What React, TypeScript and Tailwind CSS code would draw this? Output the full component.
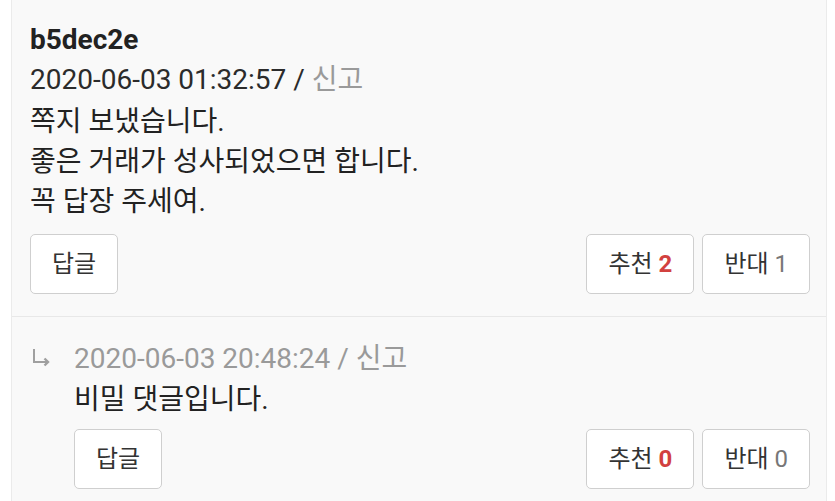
import React from "react";

const font = { fontFamily: "Roboto, 'Noto Sans CJK KR', sans-serif" };

function Btn({ children }: { children: React.ReactNode }) {
  return (
    <button className="h-[60px] px-[21px] rounded-[5px] border border-[#cfcfcf] bg-white text-[24px] text-[#333] leading-none whitespace-nowrap">
      {children}
    </button>
  );
}

function VoteRow({ up, down }: { up: number; down: number }) {
  return (
    <div className="flex gap-[8px]">
      <Btn>
        추천 <span className="font-bold text-[#d2413f]">{up}</span>
      </Btn>
      <Btn>
        반대 <span className="text-[#777]">{down}</span>
      </Btn>
    </div>
  );
}

function ReplyArrow() {
  return (
    <svg width="20" height="18" viewBox="0 0 20 18" fill="none" stroke="#a0a0a0" strokeWidth="2">
      <path d="M2 0v13h13" />
      <path d="M12.5 9.5l3.5 3.5-3.5 3.5" strokeWidth="2.4" />
    </svg>
  );
}

export default function App() {
  return (
    <div className="min-h-screen bg-white" style={font}>
      <div className="ml-[11px] w-[816px] border-x border-[#ebebeb] bg-[#f9f9f9]">
        <section className="pl-[18px] pr-[16px] pt-[20px] pb-[22px] border-b border-[#e8e8e8]">
          <div className="text-[28px] leading-[40px] font-bold text-[#222]">b5dec2e</div>
          <div className="text-[28px] leading-[40px] text-[#2b2b2b]">
            2020-06-03 01:32:57 / <span className="text-[#9a9a9a]">신고</span>
          </div>
          <div className="mt-[2px] text-[28px] leading-[40px] text-[#222]">
            <p>쪽지 보냈습니다.</p>
            <p>좋은 거래가 성사되었으면 합니다.</p>
            <p>꼭 답장 주세여.</p>
          </div>
          <div className="mt-[12px] flex items-center justify-between">
            <Btn>답글</Btn>
            <VoteRow up={2} down={1} />
          </div>
        </section>
        <section className="flex pl-[20px] pr-[16px] pt-[22px] pb-[20px]">
          <div className="w-[42px] pt-[10px]">
            <ReplyArrow />
          </div>
          <div className="flex-1">
            <div className="text-[28px] leading-[40px] text-[#9a9a9a]">2020-06-03 20:48:24 / 신고</div>
            <div className="mt-px text-[28px] leading-[40px] text-[#222]">비밀 댓글입니다.</div>
            <div className="mt-[9px] flex items-center justify-between">
              <Btn>답글</Btn>
              <VoteRow up={0} down={0} />
            </div>
          </div>
        </section>
      </div>
    </div>
  );
}
